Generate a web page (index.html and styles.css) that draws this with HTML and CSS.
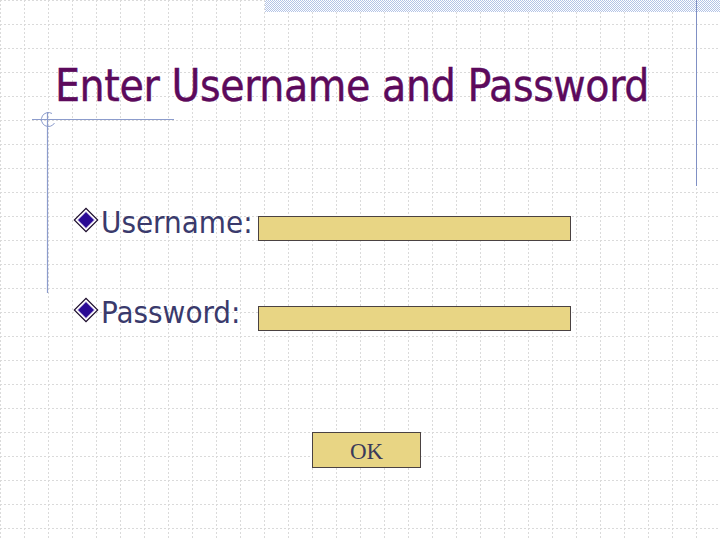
FILE: index.html
```html
<!DOCTYPE html>
<html>
<head>
<meta charset="utf-8">
<link rel="stylesheet" href="styles.css">
</head>
<body>
<div class="slide">
  <div class="hatch"></div>
  <div class="rline"></div>
  <svg class="corner" width="150" height="190" viewBox="0 0 150 190">
    <line x1="2" y1="9.5" x2="144" y2="9.5" stroke="#8c9ccc" stroke-width="1"/>
    <line x1="17.5" y1="2" x2="17.5" y2="183" stroke="#8c9ccc" stroke-width="1.2"/>
    <path d="M22 3.5 A7 7 0 1 0 24.5 13" fill="none" stroke="#8c9ccc" stroke-width="1"/>
  </svg>

  <h1 class="title">Enter Username and Password</h1>

  <div class="form">
    <div class="row">
      <div class="label">
        <svg class="bullet" width="26" height="26" viewBox="0 0 26 26">
          <path d="M13 0.5 L25.5 13 L13 25.5 L0.5 13 Z" fill="#1a0a2a"/>
          <path d="M13 2.2 L23.8 13 L13 23.8 L2.2 13 Z" fill="#ffffff"/>
          <path d="M13 4.2 L21.8 13 L13 21.8 L4.2 13 Z" fill="#b8a8e0"/>
          <path d="M13 5.2 L20.8 13 L13 20.8 L5.2 13 Z" fill="#2a0a94"/>
        </svg>
        <span>Username:</span>
      </div>
      <div class="field"></div>
    </div>
    <div class="row">
      <div class="label">
        <svg class="bullet" width="26" height="26" viewBox="0 0 26 26">
          <path d="M13 0.5 L25.5 13 L13 25.5 L0.5 13 Z" fill="#1a0a2a"/>
          <path d="M13 2.2 L23.8 13 L13 23.8 L2.2 13 Z" fill="#ffffff"/>
          <path d="M13 4.2 L21.8 13 L13 21.8 L4.2 13 Z" fill="#b8a8e0"/>
          <path d="M13 5.2 L20.8 13 L13 20.8 L5.2 13 Z" fill="#2a0a94"/>
        </svg>
        <span>Password:</span>
      </div>
      <div class="field"></div>
    </div>
  </div>

  <div class="actions">
    <div class="ok">OK</div>
  </div>
</div>
</body>
</html>
```
FILE: styles.css
```css
html, body {
  margin: 0;
  padding: 0;
  background: #ffffff;
}

.slide {
  position: relative;
  width: 720px;
  height: 540px;
  overflow: hidden;
  background-color: #ffffff;
  background-image: url("data:image/svg+xml,%3Csvg xmlns='http://www.w3.org/2000/svg' width='24' height='24'%3E%3Cpath d='M0 0.5H24M0.5 0V24' stroke='%23dadada' stroke-width='1' stroke-dasharray='2 2'/%3E%3C/svg%3E");
  background-size: 24px 24px;
  font-family: "DejaVu Sans Condensed", "DejaVu Sans", sans-serif;
}

.hatch {
  position: absolute;
  left: 265px;
  top: 0;
  width: 455px;
  height: 12px;
  background: repeating-conic-gradient(#b4c4e6 0 25%, #ffffff 0 50%) 0 0 / 2px 2px;
}

.rline {
  position: absolute;
  left: 696px;
  top: 0;
  width: 1px;
  height: 186px;
  background: #8090c4;
}

.corner {
  position: absolute;
  left: 30px;
  top: 110px;
}

.title {
  margin: 0;
  padding: 56px 0 0 55px;
  font-size: 44px;
  font-weight: normal;
  letter-spacing: -0.4px;
  line-height: 60px;
  color: #5c0a5c;
  -webkit-text-stroke: 0.4px #5c0a5c;
}

.form {
  display: flex;
  flex-direction: column;
  gap: 56px;
  margin-top: 90px;
  padding-left: 73px;
}

.row {
  display: grid;
  grid-template-columns: 185px 313px;
  align-items: center;
  height: 34px;
}

.label {
  display: flex;
  align-items: center;
  gap: 2px;
  font-size: 31px;
  letter-spacing: 0;
  color: #3a3a6c;
  line-height: 34px;
  margin-top: -3px;
}

.bullet {
  flex: none;
  margin-top: -5px;
}

.field {
  height: 23px;
  margin-top: 10px;
  background: #e8d584;
  border: 1px solid #4a4242;
}

.actions {
  display: flex;
  padding-left: 312px;
  margin-top: 102px;
}

.ok {
  width: 107px;
  height: 34px;
  border: 1px solid #4a4242;
  background: #e8d584;
  color: #3a3a5a;
  font-family: "Liberation Serif", serif;
  font-size: 23px;
  line-height: 37px;
  text-align: center;
}
```
